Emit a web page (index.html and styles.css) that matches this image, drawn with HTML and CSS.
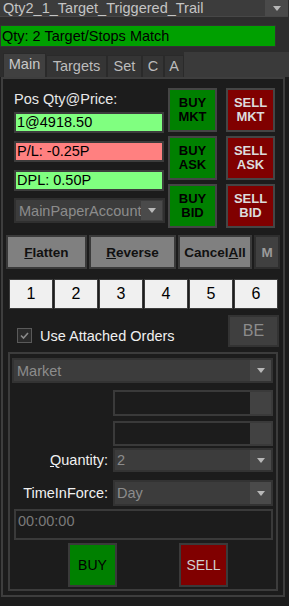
FILE: index.html
```html
<!doctype html>
<html>

<head>
    <title>order entry</title>
    <meta charset='utf-8'/>
    <link rel="stylesheet" href="styles.css">
</head>

<body>
    <div class="combo strategy">
        <span class="combo-text">Qty2_1_Target_Triggered_Trail</span>
        <span class="combo-arrow"></span>
    </div>
    <div class="status">Qty: 2 Target/Stops Match</div>

    <div class="tabs">
        <span class="tab active" style="width:43px">Main</span>
        <span class="tab" style="width:61px">Targets</span>
        <span class="tab" style="width:35px">Set</span>
        <span class="tab" style="width:22px">C</span>
        <span class="tab" style="width:20px">A</span>
        <span class="tabs-fill"></span>
    </div>

    <div class="page">
        <div class="frame">
            <div class="top">
                <div class="pos">
                    <div class="pos-label">Pos Qty@Price:</div>
                    <div class="field green first">1@4918.50</div>
                    <div class="field red">P/L: -0.25P</div>
                    <div class="field green">DPL: 0.50P</div>
                    <div class="combo account">
                        <span class="combo-text">MainPaperAccount</span>
                        <span class="combo-arrow"></span>
                    </div>
                </div>
                <div class="trade">
                    <div class="tbtn buy">BUY<br>MKT</div>
                    <div class="tbtn sell">SELL<br>MKT</div>
                    <div class="tbtn buy">BUY<br>ASK</div>
                    <div class="tbtn sell">SELL<br>ASK</div>
                    <div class="tbtn buy">BUY<br>BID</div>
                    <div class="tbtn sell">SELL<br>BID</div>
                </div>
            </div>

            <div class="actions">
                <div class="abtn flatten"><u>F</u>latten</div>
                <div class="abtn reverse"><u>R</u>everse</div>
                <div class="abtn cancel">Cancel<u>A</u>ll</div>
                <div class="abtn m">M</div>
            </div>

            <div class="nums">
                <div class="num">1</div>
                <div class="num">2</div>
                <div class="num">3</div>
                <div class="num">4</div>
                <div class="num">5</div>
                <div class="num">6</div>
            </div>

            <div class="attach">
                <label class="check">
                    <span class="box">
                        <svg width="11" height="11" viewBox="0 0 11 11"><polyline points="2,5.5 4.5,8 9,3" fill="none" stroke="#8a8a8a" stroke-width="1.6"/></svg>
                    </span>
                    Use Attached Orders
                </label>
                <div class="be">BE</div>
            </div>

            <div class="group">
                <div class="combo market">
                    <span class="combo-text">Market</span>
                    <span class="combo-arrow"></span>
                </div>
                <div class="spin first"><span class="spin-box"></span></div>
                <div class="spin second"><span class="spin-box"></span></div>
                <div class="row qty">
                    <span class="lbl"><u>Q</u>uantity:</span>
                    <div class="combo small">
                        <span class="combo-text">2</span>
                        <span class="combo-arrow"></span>
                    </div>
                </div>
                <div class="row tif">
                    <span class="lbl">TimeInForce:</span>
                    <div class="combo small">
                        <span class="combo-text">Day</span>
                        <span class="combo-arrow"></span>
                    </div>
                </div>
                <div class="time">00:00:00</div>
                <div class="order">
                    <div class="obtn buy">BUY</div>
                    <div class="obtn sell">SELL</div>
                </div>
            </div>
        </div>
    </div>
</body>

</html>
```

FILE: styles.css
```css
*{padding:0;margin:0;box-sizing:border-box;}
body{
width:289px;
height:606px;
overflow:hidden;
background:#2d2d2d;
font-family:"Liberation Sans", Arial, sans-serif;
font-size:14.5px;
color:#e6e6e6;
}

/* combos */
.combo {
    display:flex;
    align-items:stretch;
    background:#3c3c3c;
    border:2px solid #333;
    color:#8c8c8c;
}
.combo-text {
    flex:1;
    overflow:hidden;
    white-space:nowrap;
    padding-left:2px;
    display:flex;
    align-items:center;
}
.combo-arrow {
    width:21px;
    background:#4a4a4a;
    display:flex;
    align-items:center;
    justify-content:center;
}
.combo-arrow::after {
    content:"";
    border-left:4px solid transparent;
    border-right:4px solid transparent;
    border-top:5px solid #b8b8b8;
}

/* top */
.strategy {
    width:288px;
    height:17px;
    border:0;
    border-bottom:1px solid #474747;
    color:#c4c4c4;
}
.strategy .combo-text { padding-left:3px; }
.strategy .combo-arrow { width:23px; }
.status {
    margin-top:8px;
    width:276px;
    height:22px;
    background:#00a000;
    border:1px solid #333;
    color:#000;
    line-height:20px;
    padding-left:1px;
}

/* tabs */
.tabs {
    display:flex;
    height:25px;
    margin-top:5px;
    padding-left:3px;
}
.tab {
    margin-top:3px;
    background:#353535;
    border:1px solid #2a2a2a;
    border-bottom:0 none;
    color:#bcbcbc;
    text-align:center;
    line-height:21px;
}
.tab.active {
    margin-top:1px;
    background:#404040;
    color:#c8c8c8;
}
.tabs-fill { flex:1; background:#3a3a3a; }

/* page */
.page {
    height:529px;
    background:#1c1c1c;
    padding-left:1px;
}
.frame {
    width:284px;
    height:520px;
    border:2px solid #3e3e3e;
}

.top {
    display:flex;
    margin-left:11px;
}
.pos { width:151px; }
.pos-label {
    margin-top:12px;
    line-height:17px;
    color:#e8e8e8;
}
.field {
    width:150px;
    height:21px;
    margin-top:8px;
    border:2px solid #3c3c3c;
    color:#000;
    line-height:17px;
    padding-left:1px;
}
.field.first { margin-top:4px; }
.field.green { background:#80ff80; }
.field.red { background:#ff8080; }
.account {
    margin-top:7px;
    height:25px;
    width:151px;
    border-color:#303030;
}
.account .combo-text { padding-left:3px; }
.account .combo-arrow { margin:1px 1px 1px 0; }

.trade {
    display:grid;
    grid-template-columns:49px 49px;
    grid-auto-rows:44px;
    column-gap:9px;
    row-gap:4px;
    margin:9px 0 0 3px;
}
.tbtn {
    border:2px solid #454545;
    font-weight:bold;
    font-size:13px;
    line-height:14px;
    text-align:center;
    display:flex;
    align-items:center;
    justify-content:center;
}
.buy { background:#008000; color:#000; }
.sell { background:#800000; color:#dcdcdc; }

/* flatten row */
.actions {
    display:flex;
    gap:2px;
    margin:7px 0 0 3px;
}
.abtn {
    height:34px;
    background:#808080;
    border:2px solid #3a3a3a;
    color:#111;
    font-weight:bold;
    font-size:13.5px;
    display:flex;
    align-items:center;
    justify-content:center;
}
.flatten { width:81px; }
.reverse { width:87px; }
.cancel { width:74px; }
.abtn.m {
    width:26px;
    background:#404040;
    border-color:#2e2e2e;
    color:#9a9a9a;
}

/* target count */
.nums {
    display:flex;
    gap:1px;
    margin:10px 0 0 6px;
}
.num {
    width:44px;
    height:30px;
    background:#f0f0f0;
    border:1px solid #3c3c3c;
    color:#000;
    font-size:16px;
    display:flex;
    align-items:center;
    justify-content:center;
}

/* attached */
.attach {
    display:flex;
    height:32px;
    margin-top:6px;
}
.check {
    display:flex;
    align-items:center;
    gap:8px;
    height:17px;
    margin:12px 0 0 14px;
    color:#f0f0f0;
}
.box {
    width:15px;
    height:15px;
    border:1px solid #5a5a5a;
    background:#2a2a2a;
    display:flex;
    align-items:center;
    justify-content:center;
}
.be {
    width:51px;
    height:32px;
    margin:0 4px 0 auto;
    background:#3f3f3f;
    border:2px solid #333;
    color:#8c8c8c;
    font-size:16px;
    display:flex;
    align-items:center;
    justify-content:center;
}

/* order group */
.group {
    width:270px;
    height:239px;
    margin:5px 0 0 5px;
    border:2px solid #3c3c3c;
}
.market {
    width:261px;
    height:25px;
    margin:4px 0 0 2px;
}
.market .combo-text { padding-left:3px; }
.spin {
    display:flex;
    justify-content:flex-end;
    width:160px;
    height:26px;
    margin:7px 0 0 103px;
    border:2px solid #3a3a3a;
    background:#1c1c1c;
}
.spin.second { margin-top:5px; height:25px; }
.spin-box { width:21px; background:#424242; }
.row {
    display:flex;
    align-items:center;
}
.row.qty { margin-top:2px; }
.row.tif { margin-top:8px; }
.lbl {
    width:103px;
    text-align:right;
    padding-right:5px;
    color:#f0f0f0;
}
.combo.small { width:160px; height:24px; }
.row.tif .combo.small { height:26px; }
.time {
    width:259px;
    height:31px;
    margin:3px 0 0 4px;
    border:2px solid #3a3a3a;
    color:#7a7a7a;
    padding:2px 0 0 2px;
    line-height:17px;
}
.order {
    display:flex;
    margin-top:3px;
}
.obtn {
    width:49px;
    height:44px;
    border:2px solid #3a3a3a;
    font-size:14px;
    display:flex;
    align-items:center;
    justify-content:center;
}
.obtn.buy { margin-left:58px; }
.obtn.sell { margin-left:62px; color:#d0d0d0; }
```
